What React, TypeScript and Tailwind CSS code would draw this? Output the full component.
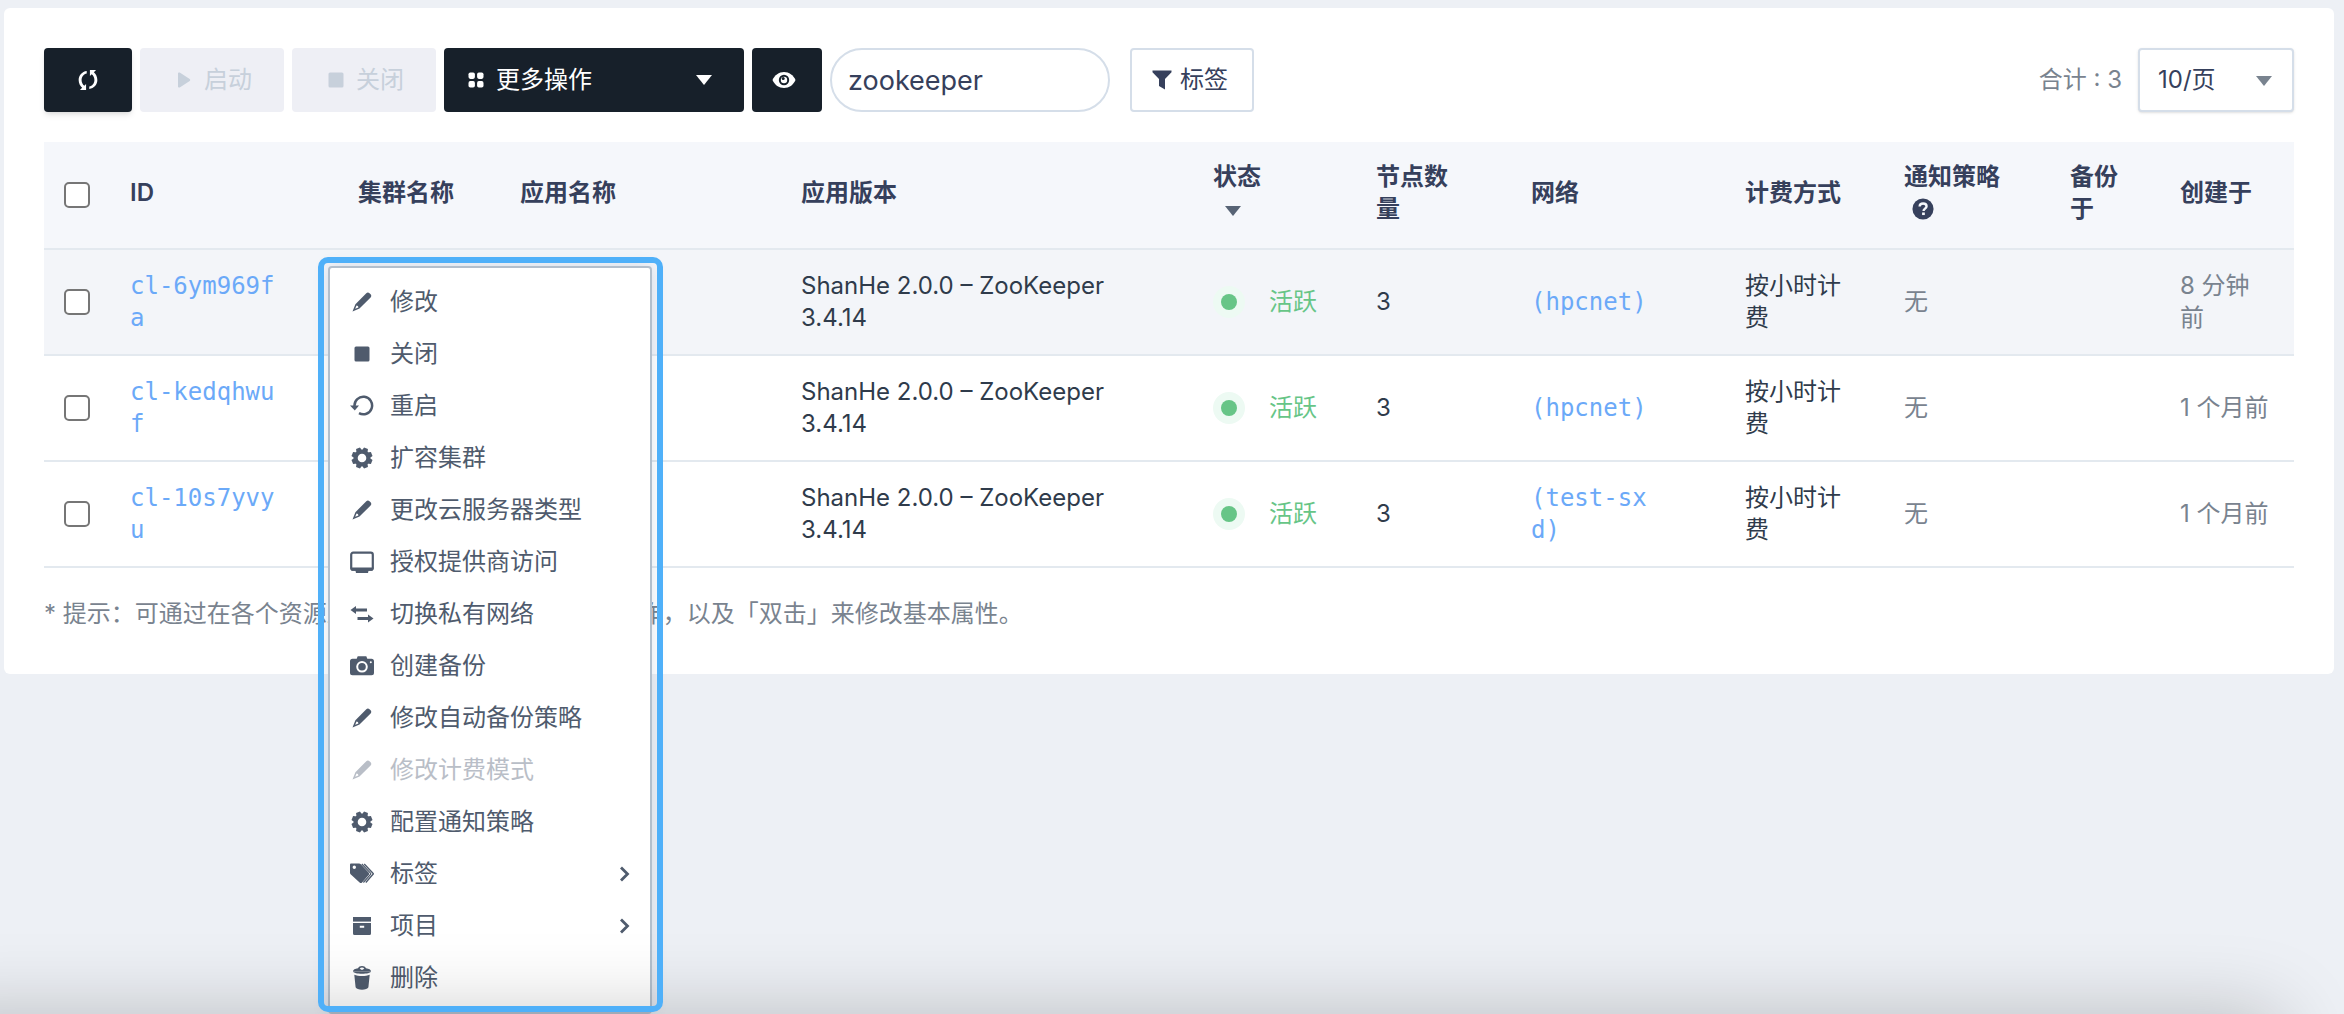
import React from "react";

type IconProps = { className?: string };

function RefreshIcon({ className }: IconProps) {
  return (
    <svg viewBox="0 0 24 24" fill="currentColor" className={className} aria-hidden="true">
      <path d="M10.6 2.2v2.6C7.4 5.4 5 8.400 5 12c0 2.700 1.200 4.900 3 6.300l1.900-1.900V23H3.200l2.400-2.500C3.400 18.600 1.800 15.600 1.800 12c0-5 3.700-9.200 8.800-9.800z" />
      <path d="M13.400 21.800v-2.600c3.200-.6 5.600-3.600 5.600-7.200 0-2.700-1.200-4.900-3-6.300l-1.900 1.900V1h6.700l-2.400 2.500c2.200 1.900 3.800 4.900 3.800 8.500 0 5-3.700 9.200-8.800 9.800z" />
    </svg>
  );
}

function PlayIcon({ className }: IconProps) {
  return (
    <svg viewBox="0 0 24 24" fill="currentColor" className={className} aria-hidden="true">
      <path d="M6 5.500c0-.9 1-1.300 1.700-.9l10 6.400c.7.500.7 1.500 0 2l-10 6.400c-.7.400-1.700 0-1.700-.9z" />
    </svg>
  );
}

function StopIcon({ className }: IconProps) {
  return (
    <svg viewBox="0 0 24 24" fill="currentColor" className={className} aria-hidden="true">
      <rect x="4.500" y="4.500" width="15" height="15" rx="1.500" />
    </svg>
  );
}

function AppsIcon({ className }: IconProps) {
  return (
    <svg viewBox="0 0 24 24" fill="currentColor" className={className} aria-hidden="true">
      <rect x="4.500" y="4.500" width="6.400" height="6.400" rx="1.800" />
      <rect x="13.100" y="4.500" width="6.400" height="6.400" rx="1.800" />
      <rect x="4.500" y="13.100" width="6.400" height="6.400" rx="1.800" />
      <rect x="13.100" y="13.100" width="6.400" height="6.400" rx="1.800" />
    </svg>
  );
}

function CaretIcon({ className }: IconProps) {
  return (
    <svg viewBox="0 0 16 10" fill="currentColor" className={className} aria-hidden="true">
      <path d="M0 0h16L8 10z" />
    </svg>
  );
}

function EyeIcon({ className }: IconProps) {
  return (
    <svg viewBox="0 0 24 24" className={className} aria-hidden="true">
      <path fill="currentColor" d="M12 4c5 0 9.400 3 11.500 8-2.100 5-6.500 8-11.500 8S2.600 17 .5 12C2.600 7 7 4 12 4z" />
      <circle cx="12" cy="12" r="5.200" fill="#17202a" />
      <circle cx="12" cy="12" r="3.200" fill="currentColor" />
      <circle cx="11.200" cy="10.500" r="1.500" fill="#17202a" />
    </svg>
  );
}

function FilterIcon({ className }: IconProps) {
  return (
    <svg viewBox="0 0 20 20" fill="currentColor" className={className} aria-hidden="true">
      <path d="M.5.500h19v1.800L13 9v10.500L7 16V9L.5 2.300z" />
    </svg>
  );
}

function HelpIcon({ className }: IconProps) {
  return (
    <svg viewBox="0 0 24 24" className={className} aria-hidden="true">
      <circle cx="12" cy="12" r="11.500" fill="currentColor" />
      <path d="M8.300 9.300c.1-2.100 1.700-3.300 3.800-3.300s3.800 1.300 3.800 3.100c0 2.400-3.300 2.600-3.300 5" fill="none" stroke="#f5f7fb" strokeWidth="2.600" />
      <rect x="11" y="15.800" width="3" height="2.800" fill="#f5f7fb" />
    </svg>
  );
}

function PencilIcon({ className }: IconProps) {
  return (
    <svg viewBox="0 0 24 24" fill="currentColor" className={className} aria-hidden="true">
      <path d="M16.300 3.200c.9-.9 2.300-.9 3.200 0l1.100 1.100c.9.900.9 2.300 0 3.200L9.500 18.600 2.500 21.500 5.400 14.200zM6.500 15.600l-1.300 3.200 3.200-1.300c0-1-.8-1.800-1.900-1.900z" fillRule="evenodd" />
    </svg>
  );
}

function RestartIcon({ className }: IconProps) {
  return (
    <svg viewBox="0 0 24 24" className={className} aria-hidden="true">
      <path d="M4.500 13a8.800 8.800 0 1 1 4.500 7.200" fill="none" stroke="currentColor" strokeWidth="2.500" transform="translate(0 -1)" />
      <path d="M0 11.500h9L4.800 16.500z" fill="currentColor" />
    </svg>
  );
}

function GearIcon({ className }: IconProps) {
  return (
    <svg viewBox="0 0 24 24" className={className} aria-hidden="true">
      <g fill="currentColor">
        {[0, 45, 90, 135, 180, 225, 270, 315].map((angle) => (
          <path key={angle} d="M8.800 5.500 9.900 1.500h4.200l1.100 4z" transform={`rotate(${angle + 22.5} 12 12)`} />
        ))}
      </g>
      <circle cx="12" cy="12" r="6.300" fill="none" stroke="currentColor" strokeWidth="4" />
    </svg>
  );
}

function MonitorIcon({ className }: IconProps) {
  return (
    <svg viewBox="0 0 24 24" className={className} aria-hidden="true">
      <rect x="1.200" y="2.700" width="21.600" height="17" rx="2" fill="none" stroke="currentColor" strokeWidth="2.200" />
      <path d="M.5 17.600h23v1.200a2 2 0 0 1-2 2h-3l-.5 2.200H6l-.5-2.200h-3a2 2 0 0 1-2-2z" fill="currentColor" />
    </svg>
  );
}

function SwapIcon({ className }: IconProps) {
  return (
    <svg viewBox="0 0 24 24" fill="currentColor" className={className} aria-hidden="true">
      <path d="M.5 8 6 4v2.500h11v3H6V12z" />
      <path d="M23.500 16.500 18 12.500V15H7.500v3H18v2.500z" />
    </svg>
  );
}

function CameraIcon({ className }: IconProps) {
  return (
    <svg viewBox="0 0 24 24" className={className} aria-hidden="true">
      <path fill="currentColor" d="M2.500 4.800h4.200l1-2.500h8.600l1 2.500h4.200A2.500 2.500 0 0 1 24 7.300v11.500a2.500 2.500 0 0 1-2.500 2.500h-19A2.500 2.500 0 0 1 0 18.800V7.300a2.500 2.500 0 0 1 2.500-2.500z" />
      <circle cx="12" cy="12.800" r="4.800" fill="none" stroke="#fff" strokeWidth="2" />
      <circle cx="20.800" cy="8.300" r="1" fill="#fff" />
    </svg>
  );
}

function TagsIcon({ className }: IconProps) {
  return (
    <svg viewBox="0 0 24 24" className={className} aria-hidden="true">
      <path
        fill="currentColor"
        fillRule="evenodd"
        d="M1.200 1.500h8c.6 0 1 .2 1.400.6l8 8.300c.8.800.8 1.900 0 2.700l-6.500 7.300c-.8.800-1.700.8-2.500 0L.6 12.200c-.4-.4-.6-.8-.6-1.400V2.700c0-.7.500-1.200 1.200-1.200zM4.300 3.600a1.700 1.700 0 1 0 0 3.400 1.700 1.700 0 0 0 0-3.400z"
      />
      <path d="M11.800 2 20.500 11.200c.4.400.4.700 0 1.100L13.400 20.500" fill="none" stroke="currentColor" strokeWidth="1.200" />
      <path d="M14.200 2 23 11.200c.4.400.4.700 0 1.100L15.800 20.500" fill="none" stroke="currentColor" strokeWidth="1.400" />
    </svg>
  );
}

function ArchiveIcon({ className }: IconProps) {
  return (
    <svg viewBox="0 0 24 24" fill="currentColor" className={className} aria-hidden="true">
      <path d="M3 3h18v4.600H3z" />
      <path d="M3 9h18v10.500a1.500 1.500 0 0 1-1.500 1.500h-15A1.500 1.500 0 0 1 3 19.500zm6.800 2.800v2h4.400v-2z" fillRule="evenodd" />
    </svg>
  );
}

function TrashIcon({ className }: IconProps) {
  return (
    <svg viewBox="0 0 24 24" fill="currentColor" className={className} aria-hidden="true">
      <path d="M12 0c2 0 3.200.9 4 2.200 2.900.3 5 1.500 5 3.300H3c0-1.800 2.100-3 5-3.300C8.800.9 10 0 12 0zm0 1.600c-1 0-1.700.4-2.300 1.100L12 4.100l2.300-1.400C13.700 2 13 1.600 12 1.600z" fillRule="evenodd" />
      <path d="M3 5.500h18c-.5 1.300-4.500 2.300-9 2.300S3.500 6.800 3 5.500z" />
      <path d="M4.300 8.800c2 .9 4.700 1.300 7.700 1.300s5.700-.4 7.700-1.300l-1.300 12.500c-.5 1.600-3.400 2.400-6.400 2.400s-5.900-.8-6.400-2.400z" />
    </svg>
  );
}

function ChevronIcon({ className }: IconProps) {
  return (
    <svg viewBox="0 0 12 16" className={className} aria-hidden="true">
      <path d="M3 1.500 9.500 8 3 14.500" fill="none" stroke="currentColor" strokeWidth="2.800" />
    </svg>
  );
}

type MenuEntry = {
  label: string;
  Icon: React.ComponentType<IconProps>;
  disabled?: boolean;
  submenu?: boolean;
};

const menuEntries: MenuEntry[] = [
  { label: "修改", Icon: PencilIcon },
  { label: "关闭", Icon: StopIcon },
  { label: "重启", Icon: RestartIcon },
  { label: "扩容集群", Icon: GearIcon },
  { label: "更改云服务器类型", Icon: PencilIcon },
  { label: "授权提供商访问", Icon: MonitorIcon },
  { label: "切换私有网络", Icon: SwapIcon },
  { label: "创建备份", Icon: CameraIcon },
  { label: "修改自动备份策略", Icon: PencilIcon },
  { label: "修改计费模式", Icon: PencilIcon, disabled: true },
  { label: "配置通知策略", Icon: GearIcon },
  { label: "标签", Icon: TagsIcon, submenu: true },
  { label: "项目", Icon: ArchiveIcon, submenu: true },
  { label: "删除", Icon: TrashIcon },
];

const clusters = [
  { id: "cl-6ym969fa", network: "(hpcnet)", created: "8 分钟前", active: true },
  { id: "cl-kedqhwuf", network: "(hpcnet)", created: "1 个月前", active: false },
  { id: "cl-10s7yvyu", network: "(test-sxd)", created: "1 个月前", active: false },
];

function Checkbox({ label }: { label: string }) {
  return (
    <input
      type="checkbox"
      aria-label={label}
      className="block size-[26px] appearance-none rounded-[5px] border-2 border-[#767676] bg-white checked:bg-[#4fb0f9]"
    />
  );
}

function Toolbar() {
  return (
    <div className="flex items-center justify-between">
      <div className="flex items-center gap-2">
        <button type="button" aria-label="刷新" className="flex h-16 w-[88px] items-center justify-center rounded bg-[#17202a] text-white shadow-md">
          <RefreshIcon className="size-[22px]" />
        </button>
        <button type="button" disabled className="flex h-16 w-36 items-center justify-center gap-2 rounded bg-[#eeeff5] text-[#c7d0db]">
          <PlayIcon className="size-6" />
          启动
        </button>
        <button type="button" disabled className="flex h-16 w-36 items-center justify-center gap-2 rounded bg-[#eeeff5] text-[#c7d0db]">
          <StopIcon className="size-6" />
          关闭
        </button>
        <button type="button" className="flex h-16 w-[300px] items-center gap-2 rounded bg-[#17202a] pr-8 pl-5 text-white">
          <AppsIcon className="size-6" />
          更多操作
          <CaretIcon className="ml-auto h-3 w-4" />
        </button>
        <button type="button" aria-label="显示列" className="flex h-16 w-[70px] items-center rounded bg-[#17202a] pl-5 text-white">
          <EyeIcon className="size-6" />
        </button>
        <input
          type="text"
          aria-label="搜索"
          defaultValue="zookeeper"
          className="h-16 w-[280px] rounded-full border-2 border-[#d5dee9] bg-white px-4 text-[27px] text-[#36405c]"
        />
        <button type="button" className="ml-3 flex h-16 w-[124px] items-center gap-2 rounded border-2 border-[#d5dee9] bg-white pl-5 text-[#36405c]">
          <FilterIcon className="size-5" />
          标签
        </button>
      </div>
      <div className="flex items-center gap-4">
        <span className="text-[#79838f]">合计 : 3</span>
        <div className="relative">
          <select aria-label="每页条数" className="h-16 w-[156px] appearance-none rounded border-2 border-[#d5dee9] bg-white pl-[18px] text-[#36405c] shadow-sm">
            <option>10/页</option>
          </select>
          <CaretIcon className="pointer-events-none absolute top-7 right-[22px] h-[10px] w-4 text-[#79838f]" />
        </div>
      </div>
    </div>
  );
}

function ClusterTable() {
  return (
    <table className="mt-[30px] w-full table-fixed border-separate border-spacing-0 text-left [&_td]:border-b-2 [&_td]:border-[#e3e9ef] [&_td]:pl-5 [&_th]:border-b-2 [&_th]:border-[#e3e9ef] [&_th]:pl-5">
      <colgroup>
        <col className="w-[66px]" />
        <col className="w-[228px]" />
        <col className="w-[162px]" />
        <col className="w-[281px]" />
        <col />
        <col className="w-[163px]" />
        <col className="w-[155px]" />
        <col className="w-[214px]" />
        <col className="w-[159px]" />
        <col className="w-[166px]" />
        <col className="w-[110px]" />
        <col className="w-[134px]" />
      </colgroup>
      <thead className="bg-[#f5f7fb] text-[#36405c]">
        <tr className="h-[108px] *:font-semibold [&>th:not(:first-child)]:pb-1">
          <th scope="col">
            <Checkbox label="全选" />
          </th>
          <th scope="col">ID</th>
          <th scope="col">集群名称</th>
          <th scope="col">应用名称</th>
          <th scope="col">应用版本</th>
          <th scope="col">
            <div>状态</div>
            <div className="flex h-8 items-center pt-1 pl-3">
              <CaretIcon className="h-3 w-4 text-[#576375]" />
            </div>
          </th>
          <th scope="col">
            <div className="w-20">节点数量</div>
          </th>
          <th scope="col">网络</th>
          <th scope="col">计费方式</th>
          <th scope="col">
            <div>通知策略</div>
            <div className="flex h-8 items-center pl-2">
              <HelpIcon className="size-[22px]" />
            </div>
          </th>
          <th scope="col">
            <div className="w-14">备份于</div>
          </th>
          <th scope="col">创建于</th>
        </tr>
      </thead>
      <tbody className="text-[#2f3b4b]">
        {clusters.map((cluster) => (
          <tr key={cluster.id} className={cluster.active ? "h-[106px] bg-[#f3f5f9]" : "h-[106px]"}>
            <td>
              <Checkbox label={cluster.id} />
            </td>
            <td>
              <a href="#" className="block w-[150px] font-['DejaVu_Sans_Mono',monospace] break-all text-[#6ba9f8]">
                {cluster.id}
              </a>
            </td>
            <td></td>
            <td></td>
            <td>
              <div className="max-w-[340px]">ShanHe 2.0.0 – ZooKeeper 3.4.14</div>
            </td>
            <td>
              <div className="flex items-center gap-6 text-[#67c587]">
                <span className="flex size-8 items-center justify-center rounded-full bg-[#edfaf3]">
                  <span className="size-4 rounded-full bg-[#67c587]"></span>
                </span>
                活跃
              </div>
            </td>
            <td>3</td>
            <td>
              <a href="#" className="block w-[120px] font-['DejaVu_Sans_Mono',monospace] break-all text-[#6ba9f8]">
                {cluster.network}
              </a>
            </td>
            <td>
              <div className="w-[100px]">按小时计费</div>
            </td>
            <td className="text-[#79838f]">无</td>
            <td></td>
            <td className="text-[#79838f]">
              <div className={cluster.active ? "w-20" : "whitespace-nowrap"}>{cluster.created}</div>
            </td>
          </tr>
        ))}
      </tbody>
    </table>
  );
}

function ContextMenu() {
  return (
    <ul role="menu" className="absolute top-[266px] left-[328px] w-[324px] rounded border-2 border-[#b3bfcc] bg-white py-2 text-[#4f5b6d] shadow-[0_0_16px_rgba(70,95,140,0.16)]">
      {menuEntries.map(({ label, Icon, disabled, submenu }) => (
        <li key={label} role="none">
          <button
            type="button"
            role="menuitem"
            disabled={disabled}
            className="flex h-[52px] w-full items-center gap-4 px-5 text-left disabled:text-[#b9bec7]"
          >
            <Icon className="size-6" />
            {label}
            {submenu && <ChevronIcon className="ml-auto h-4 w-3" />}
          </button>
        </li>
      ))}
    </ul>
  );
}

export default function App() {
  return (
    <div className="relative min-h-screen overflow-hidden bg-[#edf0f5] pt-2 pr-[10px] pl-1 font-['Inter','Noto_Sans_CJK_SC',sans-serif] text-2xl leading-8">
      <main className="rounded-md bg-white px-10 pt-10 pb-11">
        <Toolbar />
        <ClusterTable />
        <p className="mt-[30px] text-[#79838f]">
          * 提示：可通过在各个资源上点击「右键」来进行常用操作，以及「双击」来修改基本属性。
        </p>
      </main>
      <ContextMenu />
      <div className="pointer-events-none absolute top-full right-16 -left-20 h-40 shadow-[0_0_80px_rgba(0,0,0,0.22)]"></div>
      <div className="pointer-events-none absolute top-[257px] bottom-[2px] left-[318px] w-[345px] rounded-[10px] border-[6px] border-[#4fb0f9]"></div>
    </div>
  );
}
